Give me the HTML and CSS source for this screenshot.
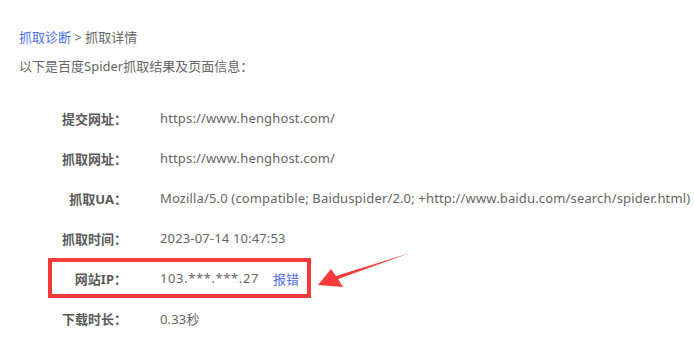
FILE: index.html
```html
<!DOCTYPE html>
<html lang="zh-CN">
<head>
<meta charset="utf-8">
<title>抓取详情</title>
<link rel="stylesheet" href="styles.css">
</head>
<body>
<div class="page">
  <div class="crumb"><a class="link">抓取诊断</a> &gt; 抓取详情</div>
  <div class="desc">以下是百度Spider抓取结果及页面信息：</div>
  <div class="rows">
    <div class="row"><span class="label">提交网址：</span><span class="value">https://www.henghost.com/</span></div>
    <div class="row"><span class="label">抓取网址：</span><span class="value">https://www.henghost.com/</span></div>
    <div class="row"><span class="label">抓取UA：</span><span class="value">Mozilla/5.0 (compatible; Baiduspider/2.0; +http://www.baidu.com/search/spider.html)</span></div>
    <div class="row"><span class="label">抓取时间：</span><span class="value">2023-07-14 10:47:53</span></div>
    <div class="row hl"><span class="label">网站IP：</span><span class="value ip">103.***.***.27</span><a class="link report">报错</a></div>
    <div class="row"><span class="label">下载时长：</span><span class="value">0.33秒</span></div>
  </div>
  <svg class="arrow" width="100" height="40" viewBox="0 0 100 40">
    <polygon points="92,1 20,27 25,35 0,33 13,17 18,24" fill="#f53a3a"/>
  </svg>
</div>
</body>
</html>
```
FILE: styles.css
```css
html, body {
  margin: 0;
  padding: 0;
  background: #fff;
}
.page {
  position: relative;
  width: 694px;
  height: 360px;
  padding: 28px 0 0 19px;
  box-sizing: border-box;
  font-family: "Noto Sans", "Noto Sans CJK SC", sans-serif;
  font-size: 13px;
  color: #666;
}
.crumb {
  height: 19px;
  line-height: 19px;
}
.link {
  color: #4e6ef2;
  text-decoration: none;
}
.desc {
  margin-top: 10px;
  height: 19px;
  line-height: 19px;
}
.rows {
  margin-top: 22px;
  margin-left: 29px;
  display: flex;
  flex-direction: column;
}
.row {
  display: flex;
  align-items: center;
  width: fit-content;
  height: 40px;
  box-sizing: border-box;
  border: 4px solid transparent;
  padding-right: 8px;
}
.row.hl {
  border-color: #f53a3a;
}
.label {
  width: 75px;
  text-align: right;
  font-weight: bold;
  color: #5a5a5a;
  white-space: nowrap;
}
.value {
  margin-left: 33px;
  white-space: nowrap;
  letter-spacing: 0.15px;
}
.value.ip {
  letter-spacing: 0.6px;
}
.report {
  margin-left: 14px;
}
.arrow {
  position: absolute;
  left: 318px;
  top: 252px;
}
```
